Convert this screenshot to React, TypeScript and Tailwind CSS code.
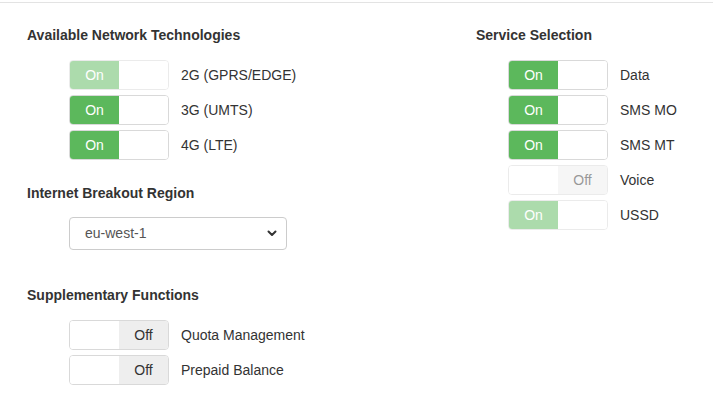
import { FC } from "react";

type ToggleProps = {
  label: string;
  on: boolean;
  disabled?: boolean;
};

const Toggle: FC<ToggleProps> = ({ label, on, disabled }) => {
  return (
    <div className="flex items-center h-[30px]">
      <div
        className={`flex w-[100px] h-[30px] border border-[#d9d9d9] rounded-[4px] overflow-hidden ${
          disabled ? "opacity-50" : ""
        }`}
      >
        {on ? (
          <>
            <div className="w-[49px] bg-[#5cb85c] text-white text-[14px] flex items-center justify-center">
              On
            </div>
            <div className="flex-1 bg-white"></div>
          </>
        ) : (
          <>
            <div className="w-[49px] bg-white"></div>
            <div className="flex-1 bg-[#eeeeee] text-[#333] text-[14px] flex items-center justify-center">
              Off
            </div>
          </>
        )}
      </div>
      <span className="ml-[12px] text-[14px] text-[#333]">{label}</span>
    </div>
  );
};

const Heading: FC<{ children: string; className?: string }> = ({ children, className }) => (
  <h3 className={`text-[14px] leading-[18px] font-bold text-[#333] ${className ?? ""}`}>{children}</h3>
);

const App: FC = () => {
  return (
    <div
      className="w-[713px] h-[410px] bg-white border-t border-[#e3e3e3] mt-[2px] overflow-hidden"
      style={{ fontFamily: '"Liberation Sans", Arial, sans-serif' }}
    >
      <div className="flex pl-[27px] pt-[23px]">
        <div className="w-[449px]">
          <Heading>Available Network Technologies</Heading>
          <div className="mt-[16px] ml-[42px] flex flex-col gap-[5px]">
            <Toggle label="2G (GPRS/EDGE)" on disabled />
            <Toggle label="3G (UMTS)" on />
            <Toggle label="4G (LTE)" on />
          </div>

          <Heading className="mt-[24px]">Internet Breakout Region</Heading>
          <div className="mt-[15px] ml-[42px] w-[218px] h-[33px] border border-[#cccccc] rounded-[4px] flex items-center justify-between pl-[15px] pr-[9px]">
            <span className="text-[14px] text-[#555]">eu-west-1</span>
            <svg width="10" height="7" viewBox="0 0 10 7" fill="none">
              <path d="M1.5 1.5 L5 5 L8.5 1.5" stroke="#333" strokeWidth="2" strokeLinecap="round" strokeLinejoin="round" />
            </svg>
          </div>

          <Heading className="mt-[36px]">Supplementary Functions</Heading>
          <div className="mt-[16px] ml-[42px] flex flex-col gap-[5px]">
            <Toggle label="Quota Management" on={false} />
            <Toggle label="Prepaid Balance" on={false} />
          </div>
        </div>

        <div className="flex-1">
          <Heading>Service Selection</Heading>
          <div className="mt-[16px] ml-[32px] flex flex-col gap-[5px]">
            <Toggle label="Data" on />
            <Toggle label="SMS MO" on />
            <Toggle label="SMS MT" on />
            <Toggle label="Voice" on={false} disabled />
            <Toggle label="USSD" on disabled />
          </div>
        </div>
      </div>
    </div>
  );
};

export default App;
